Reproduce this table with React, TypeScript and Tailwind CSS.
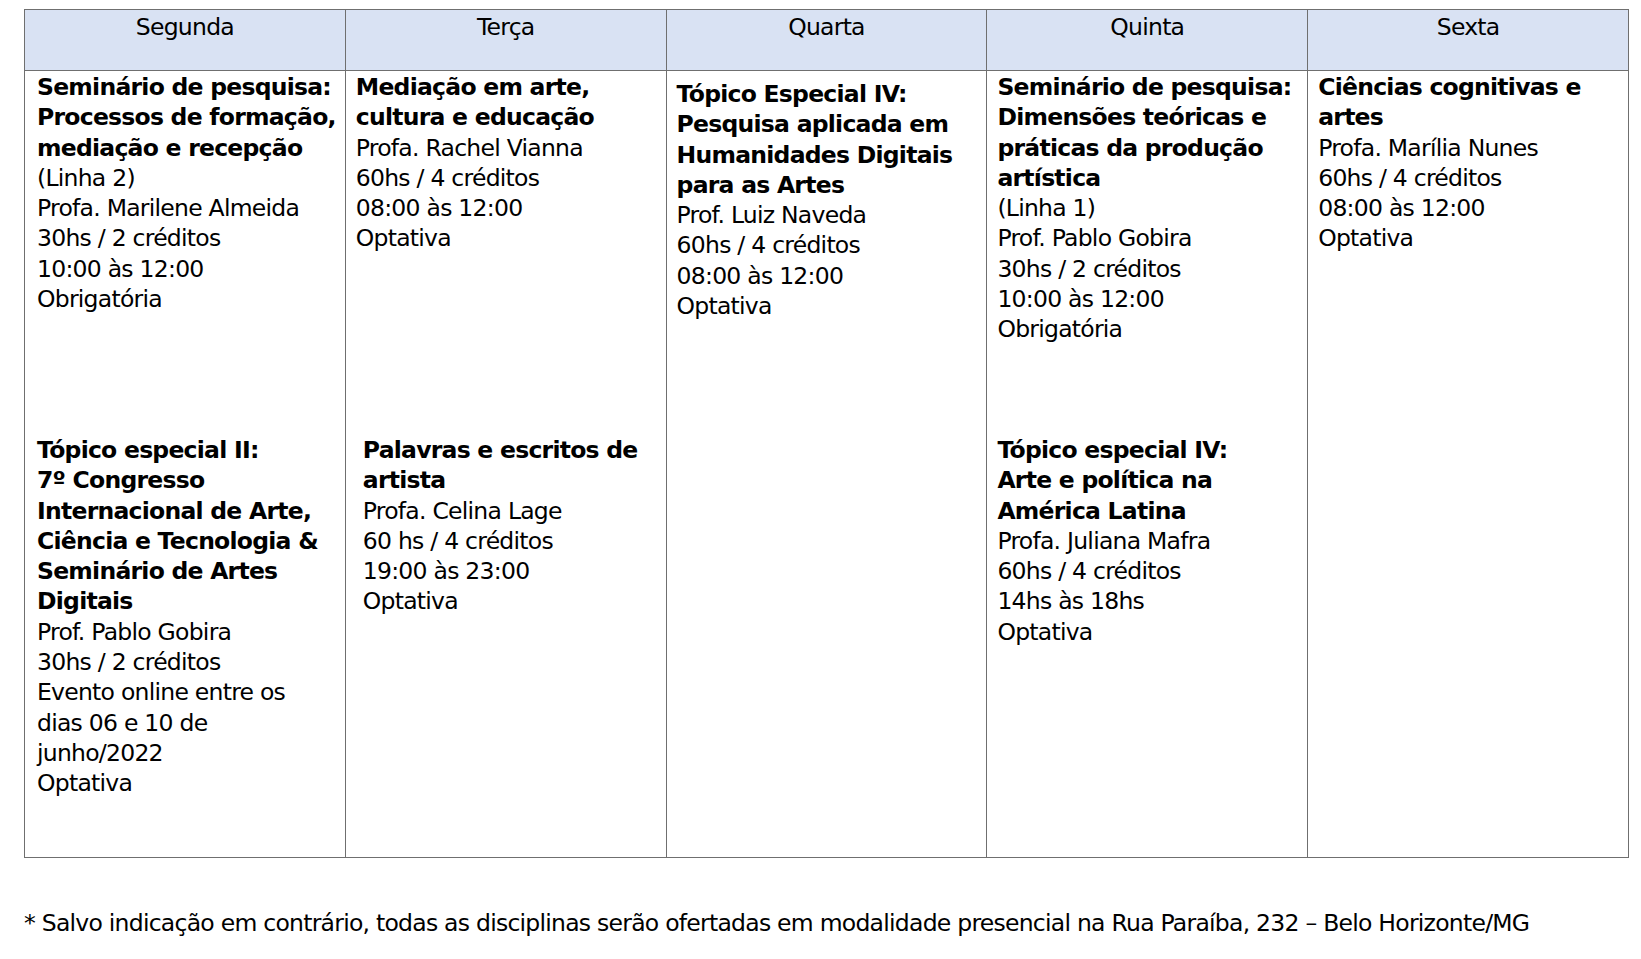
const font = { fontFamily: "'DejaVu Sans', Verdana, sans-serif" };

type Block = { bold: string[]; lines: string[]; indent?: boolean };
type Day = { name: string; top: Block; bottom?: Block; lower?: boolean; first?: boolean };

const days: Day[] = [
  {
    name: 'Segunda',
    first: true,
    top: {
      bold: ['Seminário de pesquisa:', 'Processos de formação,', 'mediação e recepção'],
      lines: ['(Linha 2)', 'Profa. Marilene Almeida', '30hs / 2 créditos', '10:00 às 12:00', 'Obrigatória'],
    },
    bottom: {
      bold: [
        'Tópico especial II:',
        '7º Congresso',
        'Internacional de Arte,',
        'Ciência e Tecnologia &',
        'Seminário de Artes',
        'Digitais',
      ],
      lines: [
        'Prof. Pablo Gobira',
        '30hs / 2 créditos',
        'Evento online entre os',
        'dias 06 e 10 de',
        'junho/2022',
        'Optativa',
      ],
    },
  },
  {
    name: 'Terça',
    top: {
      bold: ['Mediação em arte,', 'cultura e educação'],
      lines: ['Profa. Rachel Vianna', '60hs / 4 créditos', '08:00 às 12:00', 'Optativa'],
    },
    bottom: {
      bold: ['Palavras e escritos de', 'artista'],
      lines: ['Profa. Celina Lage', '60 hs / 4 créditos', '19:00 às 23:00', 'Optativa'],
      indent: true,
    },
  },
  {
    name: 'Quarta',
    lower: true,
    top: {
      bold: ['Tópico Especial IV:', 'Pesquisa aplicada em', 'Humanidades Digitais', 'para as Artes'],
      lines: ['Prof. Luiz Naveda', '60hs / 4 créditos', '08:00 às 12:00', 'Optativa'],
    },
  },
  {
    name: 'Quinta',
    top: {
      bold: ['Seminário de pesquisa:', 'Dimensões teóricas e', 'práticas da produção', 'artística'],
      lines: ['(Linha 1)', 'Prof. Pablo Gobira', '30hs / 2 créditos', '10:00 às 12:00', 'Obrigatória'],
    },
    bottom: {
      bold: ['Tópico especial IV:', 'Arte e política na', 'América Latina'],
      lines: ['Profa. Juliana Mafra', '60hs / 4 créditos', '14hs às 18hs', 'Optativa'],
    },
  },
  {
    name: 'Sexta',
    top: {
      bold: ['Ciências cognitivas e', 'artes'],
      lines: ['Profa. Marília Nunes', '60hs / 4 créditos', '08:00 às 12:00', 'Optativa'],
    },
  },
];

function Course({ block }: { block: Block }) {
  return (
    <div className={block.indent ? 'ml-[7px]' : ''}>
      {block.bold.map((l) => (
        <div key={l} className="font-bold whitespace-nowrap">
          {l}
        </div>
      ))}
      {block.lines.map((l) => (
        <div key={l} className="whitespace-nowrap">
          {l}
        </div>
      ))}
    </div>
  );
}

export default function App() {
  return (
    <div
      className="w-[1641px] h-[959px] bg-white pl-[24px] pt-[9px] text-[23.5px] leading-[30.3px] tracking-[-0.75px] text-black"
      style={font}
    >
      <div className="grid grid-cols-5 w-[1605px] border-l border-t border-[#6f6f6f]">
        {days.map((d) => (
          <div
            key={d.name}
            className="h-[61px] bg-[#d9e2f3] border-r border-b border-[#6f6f6f] text-center pt-[2px]"
          >
            {d.name}
          </div>
        ))}
        {days.map((d) => (
          <div
            key={d.name + '-body'}
            className={`h-[787px] border-r border-b border-[#6f6f6f] pr-[8px] ${d.first ? 'pl-[12px]' : 'pl-[10px]'} ${d.lower ? 'pt-[8px]' : 'pt-[1px]'}`}
          >
            <div className={d.lower ? 'h-[356px]' : 'h-[363px]'}>
              <Course block={d.top} />
            </div>
            {d.bottom && <Course block={d.bottom} />}
          </div>
        ))}
      </div>
      <p className="mt-[50px] whitespace-nowrap">
        * Salvo indicação em contrário, todas as disciplinas serão ofertadas em modalidade presencial na Rua Paraíba, 232 – Belo Horizonte/MG
      </p>
    </div>
  );
}
